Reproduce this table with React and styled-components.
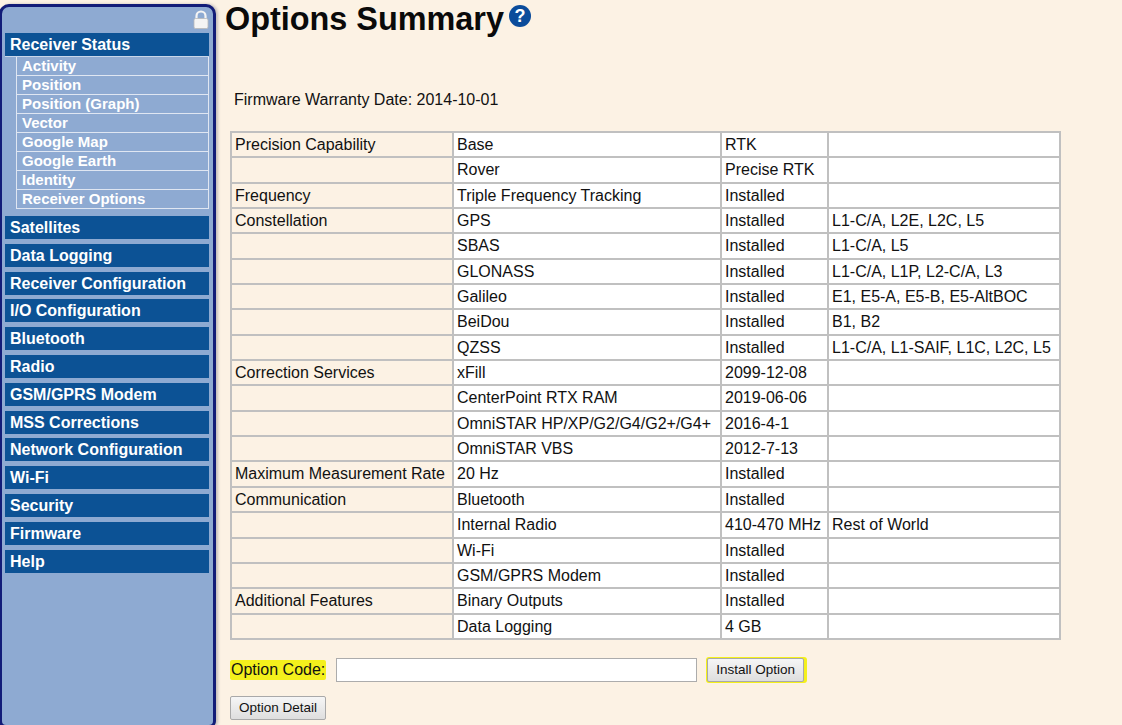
import React from 'react';
import styled, {createGlobalStyle} from 'styled-components';

const GlobalStyle = createGlobalStyle`
    html, body {
        margin: 0;
        padding: 0;
        background: #fcf2e4;
        font-family: "Liberation Sans", Arial, sans-serif;
    }
`;

const subItems = [
    'Activity', 'Position', 'Position (Graph)', 'Vector',
    'Google Map', 'Google Earth', 'Identity', 'Receiver Options'
];

const menuItems = [
    'Satellites', 'Data Logging', 'Receiver Configuration', 'I/O Configuration',
    'Bluetooth', 'Radio', 'GSM/GPRS Modem', 'MSS Corrections',
    'Network Configuration', 'Wi-Fi', 'Security', 'Firmware', 'Help'
];

// [group, option, status, details]
const rows = [
    ['Precision Capability', 'Base', 'RTK', ''],
    ['', 'Rover', 'Precise RTK', ''],
    ['Frequency', 'Triple Frequency Tracking', 'Installed', ''],
    ['Constellation', 'GPS', 'Installed', 'L1-C/A, L2E, L2C, L5'],
    ['', 'SBAS', 'Installed', 'L1-C/A, L5'],
    ['', 'GLONASS', 'Installed', 'L1-C/A, L1P, L2-C/A, L3'],
    ['', 'Galileo', 'Installed', 'E1, E5-A, E5-B, E5-AltBOC'],
    ['', 'BeiDou', 'Installed', 'B1, B2'],
    ['', 'QZSS', 'Installed', 'L1-C/A, L1-SAIF, L1C, L2C, L5'],
    ['Correction Services', 'xFill', '2099-12-08', ''],
    ['', 'CenterPoint RTX RAM', '2019-06-06', ''],
    ['', 'OmniSTAR HP/XP/G2/G4/G2+/G4+', '2016-4-1', ''],
    ['', 'OmniSTAR VBS', '2012-7-13', ''],
    ['Maximum Measurement Rate', '20 Hz', 'Installed', ''],
    ['Communication', 'Bluetooth', 'Installed', ''],
    ['', 'Internal Radio', '410-470 MHz', 'Rest of World'],
    ['', 'Wi-Fi', 'Installed', ''],
    ['', 'GSM/GPRS Modem', 'Installed', ''],
    ['Additional Features', 'Binary Outputs', 'Installed', ''],
    ['', 'Data Logging', '4 GB', ''],
];

const LockIcon = () => (
    <svg width="16" height="19" viewBox="0 0 16 19">
        <path d="M3.5 9 V6 a4.5 4.5 0 0 1 9 0 V9" fill="none" stroke="#f4f4f4" strokeWidth="2.2"/>
        <rect x="1" y="8.5" width="14" height="10" rx="1.5" fill="#f4f4f4" stroke="#b9b9b9" strokeWidth="0.8"/>
    </svg>
);

const App = () => {
    return (
        <Page>
            <GlobalStyle/>
            <Sidebar>
                <LockRow><LockIcon/></LockRow>
                <MenuHeader>Receiver Status</MenuHeader>
                <SubMenu>
                    {subItems.map(item => (
                        <SubItem key={item}>{item}</SubItem>
                    ))}
                </SubMenu>
                <MenuList>
                    {menuItems.map(item => (
                        <MenuItem key={item}>{item}</MenuItem>
                    ))}
                </MenuList>
            </Sidebar>
            <Main>
                <Title>
                    Options Summary
                    <HelpBadge>?</HelpBadge>
                </Title>
                <Warranty>Firmware Warranty Date: 2014-10-01</Warranty>
                <OptionsTable>
                    <colgroup>
                        <col style={{width: 222}}/>
                        <col style={{width: 268}}/>
                        <col style={{width: 107}}/>
                        <col style={{width: 232}}/>
                    </colgroup>
                    <tbody>
                        {rows.map((row, i) => (
                            <tr key={i}>
                                <GroupCell>{row[0]}</GroupCell>
                                <Cell>{row[1]}</Cell>
                                <Cell>{row[2]}</Cell>
                                <Cell>{row[3]}</Cell>
                            </tr>
                        ))}
                    </tbody>
                </OptionsTable>
                <CodeRow>
                    <Highlight>Option Code:</Highlight>
                    <CodeInput type="text"/>
                    <HighlightButton>
                        <PageButton>Install Option</PageButton>
                    </HighlightButton>
                </CodeRow>
                <DetailRow>
                    <PageButton>Option Detail</PageButton>
                </DetailRow>
            </Main>
        </Page>
    );
};

export default App;

const Page = styled.div`
    display: flex;
    align-items: flex-start;
    width: 1122px;
    height: 725px;
    overflow: hidden;
    background: #fcf2e4;
`;

const Sidebar = styled.div`
    flex: none;
    box-sizing: border-box;
    width: 217px;
    height: 724px;
    margin: 4px 0 0 -1px;
    padding: 0 4px 0 3px;
    background: #8eaad2;
    border: 3px solid #121c78;
    border-radius: 10px 10px 7px 7px;
    box-shadow: 2px 0 3px rgba(90, 90, 110, 0.35);
    display: flex;
    flex-direction: column;
`;

const LockRow = styled.div`
    display: flex;
    justify-content: flex-end;
    height: 26px;
    padding-top: 3px;
    box-sizing: border-box;
`;

const MenuHeader = styled.div`
    background: #0c5295;
    color: #fff;
    font-weight: bold;
    font-size: 16px;
    height: 23px;
    line-height: 24px;
    padding-left: 5px;
    border-bottom: 1px solid #c9d6ea;
`;

const SubMenu = styled.div`
    margin-left: 11px;
    border: 1px solid #dfe6f2;
    border-top: none;
`;

const SubItem = styled.div`
    color: #fff;
    font-weight: bold;
    font-size: 15px;
    height: 18px;
    line-height: 18px;
    padding-left: 5px;
    border-bottom: 1px solid #dfe6f2;

    &:last-child {
        border-bottom: none;
    }
`;

const MenuList = styled.div`
    display: flex;
    flex-direction: column;
    gap: 4.8px;
    margin-top: 7px;
`;

const MenuItem = styled.div`
    background: #0c5295;
    color: #fff;
    font-weight: bold;
    font-size: 16px;
    height: 23px;
    line-height: 23px;
    padding-left: 5px;
`;

const Main = styled.div`
    flex: 1;
    padding-left: 9px;
    color: #111;
`;

const Title = styled.h1`
    display: flex;
    align-items: flex-start;
    margin: 1px 0 0 0;
    font-size: 32.4px;
    line-height: 36px;
    font-weight: bold;
    color: #0a0a0a;
`;

const HelpBadge = styled.span`
    display: inline-flex;
    align-items: center;
    justify-content: center;
    width: 22px;
    height: 22px;
    margin: 4px 0 0 5px;
    border-radius: 50%;
    background: #0b4c9b;
    color: #fff;
    font-size: 18px;
    line-height: 22px;
`;

const Warranty = styled.div`
    margin: 53px 0 0 9px;
    font-size: 16px;
    line-height: 20px;
`;

const OptionsTable = styled.table`
    margin: 21px 0 0 5px;
    width: 829px;
    table-layout: fixed;
    border-collapse: collapse;
    border: 2px solid #b7b7b7;
    font-size: 16px;
`;

const Cell = styled.td`
    background: #fff;
    border: 2px solid #c0c0c0;
    padding: 2px 3px;
    line-height: 19.35px;
    white-space: nowrap;
    overflow: hidden;
`;

const GroupCell = styled(Cell)`
    background: #fcf2e4;
`;

const CodeRow = styled.div`
    display: flex;
    align-items: center;
    margin: 17px 0 0 5px;
`;

const Highlight = styled.span`
    background: #f4f01c;
    font-size: 16px;
    line-height: 20px;
    padding: 0 1px;
    border-radius: 2px;
`;

const CodeInput = styled.input`
    box-sizing: border-box;
    width: 361px;
    height: 24px;
    margin-left: 10px;
    border: 1px solid #acacac;
    background: #fff;
`;

const HighlightButton = styled.span`
    display: inline-flex;
    margin-left: 9px;
    padding: 1px 3px 1px 1px;
    background: #f4f01c;
    border-radius: 3px;
`;

const PageButton = styled.button`
    box-sizing: border-box;
    height: 24px;
    padding: 0 8px;
    font-family: "Liberation Sans", Arial, sans-serif;
    font-size: 13.5px;
    color: #111;
    background: linear-gradient(#f6f6f6, #dedede);
    border: 1px solid #a9a9a9;
    border-radius: 2px;
`;

const DetailRow = styled.div`
    margin: 13px 0 0 5px;
`;
